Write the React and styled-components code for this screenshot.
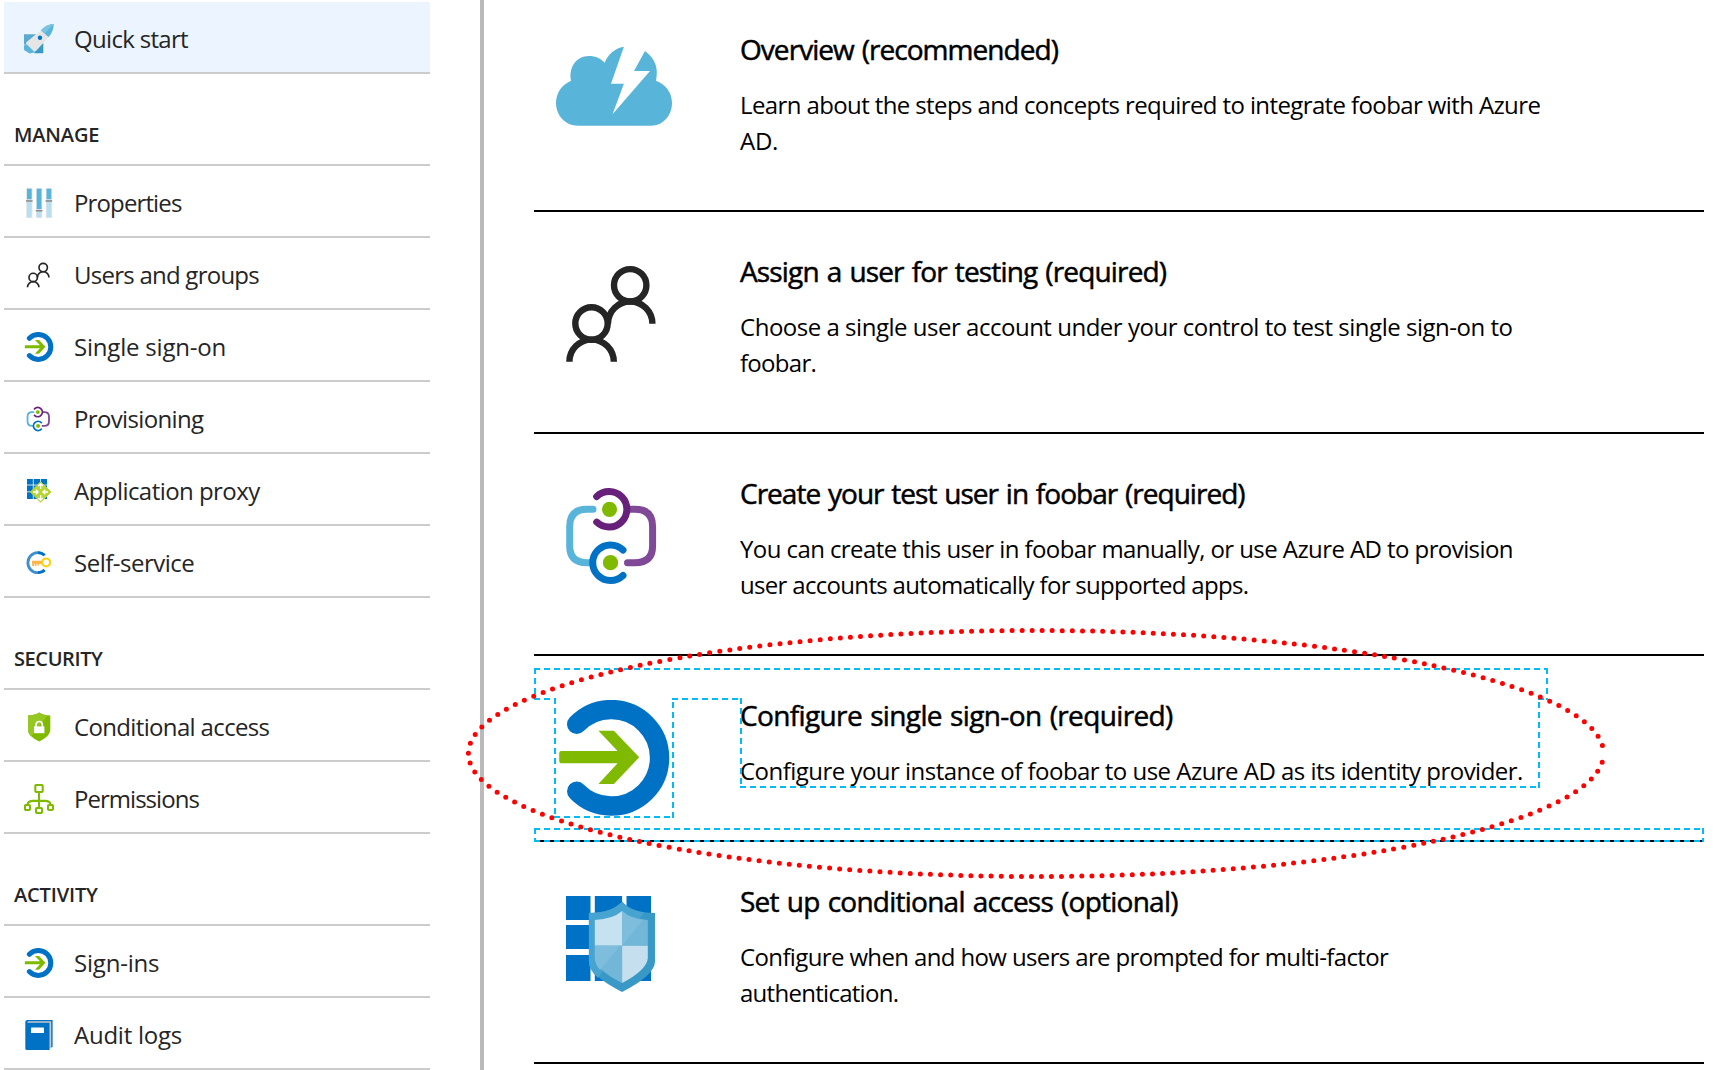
import React from "react";
import styled, { createGlobalStyle } from "styled-components";

const GlobalStyle = createGlobalStyle`
  html, body { margin: 0; padding: 0; background: #fff; overflow: hidden; }
  *, *::before, *::after { box-sizing: border-box; }
`;

const Page = styled.div`
  position: relative;
  display: flex;
  width: 1714px;
  height: 1070px;
  overflow: hidden;
  background: #fff;
  color: #000;
  font-family: "Open Sans", "Noto Sans", sans-serif;
`;

const Sidebar = styled.nav`
  flex: none;
  width: 484px;
  height: 100%;
  padding: 2px 50px 0 4px;
  border-right: 4px solid #bababa;
  color: #252525;
`;

const SectionTitle = styled.h2`
  display: flex;
  align-items: flex-end;
  height: 92px;
  margin: 0;
  padding: 0 0 13px 10px;
  border-bottom: 2px solid #ccc;
  font-size: 20px;
  font-weight: 600;
  line-height: 32px;
  white-space: nowrap;
  letter-spacing: ${(p) => p.$track || 0}px;
`;

const MenuItem = styled.a`
  display: flex;
  align-items: center;
  gap: 20px;
  height: 72px;
  padding: 4px 0 0 20px;
  border-bottom: 2px solid #ccc;
  background: ${(p) => (p.$active ? "#ecf5ff" : "transparent")};
`;

const MenuIcon = styled.svg`
  flex: none;
  width: 30px;
  height: 30px;
`;

const MenuLabel = styled.span`
  font-size: 24px;
  line-height: 32px;
  white-space: nowrap;
  letter-spacing: ${(p) => p.$track || 0}px;
`;

const Main = styled.main`
  flex: 1;
  padding: 0 10px 0 50px;
  margin-top: -10px;
`;

const Step = styled.section`
  display: flex;
  align-items: flex-start;
  gap: 68px;
  height: ${(p) => (p.$short ? 186 : 222)}px;
  padding: 39px 0 0 22px;
  border-bottom: 2px solid #000;
`;

const StepIcon = styled.svg`
  flex: none;
  width: 116px;
  height: 116px;
  margin-top: 5px;
`;

const StepBody = styled.div`
  flex: 1;
`;

const StepTitle = styled.h3`
  margin: 0 0 18px;
  font-size: 28px;
  font-weight: 400;
  line-height: 40px;
  white-space: nowrap;
  word-spacing: 1.5px;
  -webkit-text-stroke: 0.5px #000;
  letter-spacing: ${(p) => p.$track || 0}px;
`;

const StepLine = styled.span`
  display: block;
  font-size: 24px;
  line-height: 36px;
  white-space: nowrap;
  letter-spacing: ${(p) => p.$track || 0}px;
`;

const Annotation = styled.svg`
  position: absolute;
  left: 0;
  top: 0;
  width: 1714px;
  height: 1070px;
  pointer-events: none;
`;

/* ---- glyphs drawn on a 30 unit grid ---- */

const RocketGlyph = () => (
  <>
    <path d="M0 10.300H12L1.500 20.500H0Z" fill="#59a9d0" />
    <path d="M10.300 29.300H19.300V18.500L10.300 27Z" fill="#3999c6" />
    <path d="M1.200 20L0 22V26L5.500 29.500L11 28.200L8 22Z" fill="#59b4d9" />
    <path d="M2.200 19.800Q2 18.600 3.200 17.600L17.200 6.200L24.400 13.200L12.400 26.600Q11 28 10 27.500Z" fill="#e5e5e5" />
    <path d="M17 6.200Q22 .6 29.800 0Q29.400 8 24.500 13.300Z" fill="#59b4d9" />
    <path d="M17 6.200Q22 .6 29.800 0L20.600 9.600Z" fill="#7cc3e1" />
    <circle cx="16" cy="13.800" r="2.200" fill="#0072c6" />
  </>
);

const SlidersGlyph = () => (
  <>
    {[[2.2, 12.2], [12, 22], [21.8, 12.2]].map(([x, y]) => (
      <g key={x}>
        <path d={`M${x} 0h6.2v30h-6.2z`} fill="#dfe5e8" />
        <path d={`M${x + 0.8} .8h4.6v28.4h-4.6z`} fill="#b8dff0" />
        <path d={`M${x + 0.8} .8h4.6V${y}h-4.6z`} fill="#59b4d9" />
        <path d={`M${x} ${y - 1}h6.2v1h-6.2z`} fill="#e5e5e5" />
        <path d={`M${x - 0.2} ${y}h6.6v1.5h-6.6z`} fill="#8a8a8a" />
      </g>
    ))}
  </>
);

const ProxyGlyph = () => (
  <>
    <path d="M3 3h20v20H3z" fill="#0072c6" />
    <path d="M9.300 3v20M16.500 3v20M3 9h20M3 15.800h20" stroke="#fff" strokeWidth=".8" />
    <path d="M16.600 5.800L27 16L16.600 26.200L6.400 16Z" fill="#b8d432" stroke="#b8d432" strokeLinejoin="round" />
    <path d="M16.600 8v5M14.300 10l2.300-2.300L18.900 10M16.600 19v5M14.300 22l2.300 2.300L18.900 22M9 16h5M12 13.700l2.200 2.300L12 18.300M24 16h-5M21.200 13.700L19 16l2.200 2.300" fill="none" stroke="#fff" strokeWidth="1.300" />
  </>
);

const KeyGlyph = () => (
  <>
    <path d="M20.600 7.300A10 10 0 1 0 20.600 22.100" fill="none" stroke="#3e8ed0" strokeWidth="2.800" />
    <path d="M14 4.700A10 10 0 0 1 20.600 7.300M20.600 22.100A10 10 0 0 1 14 24.700" fill="none" stroke="#0072c6" strokeWidth="2.800" />
    <path d="M8 12.800H18v3H15v1.600h-1.500v-1.600h-1V18h-1.600v-2.200h-.8V18H8.200z" fill="#ffb345" />
    <circle cx="22.200" cy="14.400" r="3.900" fill="#fff" stroke="#fcd116" strokeWidth="2.200" />
  </>
);

const ShieldLockGlyph = () => (
  <>
    <path d="M15.200.6Q19 3.400 26.300 3.400V18Q26.300 24 15.200 29.600Q4 24 4 18V3.400Q11.400 3.400 15.200.6Z" fill="#7fba00" />
    <path d="M15.200.6Q19 3.400 23.600 3.300L7 24.600Q4 21.400 4 18V3.400Q11.400 3.400 15.200.6Z" fill="#96c823" />
    <path d="M10 14.400h10.400v6.800H10z" fill="#fff" />
    <path d="M12.100 15V12.800a3.100 3.300 0 0 1 6.200 0V15" fill="none" stroke="#fff" strokeWidth="1.700" />
  </>
);

const TreeGlyph = () => (
  <g fill="none" stroke="#7fba00" strokeWidth="2.100">
    <path d="M15 8.300V23.500M3.500 20.600Q4 16.900 9 16.900H21Q26 16.900 26.600 20.600" />
    <rect x="11.300" y="1" width="7.400" height="7" rx="1" />
    <rect x="1" y="21" width="5" height="5" rx="1" />
    <rect x="12" y="24" width="6" height="5" rx="1" />
    <rect x="24" y="21" width="5" height="5" rx="1" />
  </g>
);

const BookGlyph = () => (
  <>
    <path d="M3 0H28.600V27L26 28V2.600H3Z" fill="#0072c6" />
    <path d="M3.600 1.200H27.200V27.600L25.600 28.600V3H3.600Z" fill="#c8c8c8" />
    <path d="M1.300 2Q1.300 0 3.400 0V2.800H25.600V30H2.800Q1.300 30 1.300 28.400Z" fill="#0072c6" />
    <rect x="7" y="7.400" width="13" height="5.600" rx=".6" fill="#fff" />
  </>
);

/* ---- glyphs drawn on a 116 unit grid, shared by the menu and the steps ---- */

const CloudGlyph = () => (
  <path
    fill="#59b4d9"
    d="M22 91.700C9.500 91.700 0 81.500 0 69C0 59 6 50.500 15 46.700C12.500 33 20.500 22 33 22C39.500 22 45 24.500 48.600 28.700C52 20.500 58.500 14.500 67.900 12.700L55 49.700H67.900L56.500 80.300L94 37H78L89 17C96.500 22.500 100.800 30 100.800 38C100.800 41 100.600 44 100 46.700C109.500 50 116 58.500 116 69C116 81.500 107 91.700 95 91.700Z"
  />
);

const PeopleGlyph = () => (
  <g fill="none" stroke="#252525" strokeWidth="6.400">
    <circle cx="74.200" cy="29.300" r="16.200" />
    <path d="M52 67.700a22.200 22.200 0 0 1 44.400 0" />
    <circle cx="35.500" cy="67.500" r="16.200" />
    <path d="M13.400 105.800a22.200 22.200 0 0 1 44.400 0" />
  </g>
);

const SyncGlyph = () => (
  <>
    <g fill="none" strokeWidth="7" strokeLinecap="round">
      <path d="M37 31.300H31Q13.700 31.300 13.700 48.600V68Q13.700 84.700 31 84.700H36" stroke="#59b4d9" />
      <path d="M74 31.300H79Q96.600 31.300 96.600 48.600V68Q96.600 84.700 79 84.700H71.500" stroke="#804998" />
      <path d="M40.700 18.500A17.800 17.800 0 1 1 40.700 44.100" stroke="#68217a" />
      <path d="M67 72A17.800 17.800 0 1 0 67 97.400" stroke="#0072c6" />
    </g>
    <circle cx="53.500" cy="31.300" r="7.600" fill="#7fba00" />
    <circle cx="54.500" cy="84.700" r="7.600" fill="#7fba00" />
  </>
);

const SignOnGlyph = () => (
  <>
    <path d="M20.700 24.300A48.200 48.200 0 1 1 20.700 91.300" fill="none" stroke="#0072c6" strokeWidth="19.400" strokeLinecap="round" />
    <path d="M5.200 51H61.600L42.400 30.700H57.900L83.200 57.300L57.900 84H42.400L61.600 63.300H5.200Q3.200 63.300 3.200 61.300V53Q3.200 51 5.200 51Z" fill="#7fba00" />
  </>
);

const ShieldGridGlyph = () => (
  <>
    <path d="M10 10h24.500v24H10zM38.800 10h27.300v24H38.800zM70.500 10H95v24H70.500zM10 39h24.500v24H10zM10 69h24.500v26H10zM38.800 39H95v24H38.800zM38.800 69H95v26H38.800z" fill="#0072c6" />
    <path d="M66.100 15.700Q77 27 99 27V75.500Q99 89 66.100 106Q32.900 89 32.900 75.500V27Q55 27 66.100 15.700Z" fill="#3999c6" />
    <path d="M66.100 15.700Q73 24 88 26.500L42 92Q32.900 84 32.900 75.500V27Q55 27 66.100 15.700Z" fill="#47a3cf" />
    <path d="M66.100 25V59.700H38.800V34Q57 33 66.100 25Z" fill="#c6e2f0" />
    <path d="M66.100 25Q75 33 91.800 34V59.700H66.100Z" fill="#73b7d8" />
    <path d="M66.100 25Q75 33 87 33.800L66.100 59.700Z" fill="#7fbddc" />
    <path d="M38.800 59.700H66.100V97Q40 84 38.800 72Z" fill="#73b7d8" />
    <path d="M38.800 59.700H64L44 84Q39 78 38.800 72Z" fill="#7fbddc" />
    <path d="M66.100 59.700H91.800V72Q91 84 66.100 97Z" fill="#c6dfee" />
  </>
);

const menu = [
  { items: [{ label: "Quick start", Glyph: RocketGlyph, grid: 30, active: true, track: -0.68 }] },
  {
    title: "MANAGE",
    track: -0.15,
    items: [
      { label: "Properties", Glyph: SlidersGlyph, grid: 30, track: -0.87 },
      { label: "Users and groups", Glyph: PeopleGlyph, grid: 116, track: -0.75 },
      { label: "Single sign-on", Glyph: SignOnGlyph, grid: 116, track: -0.2 },
      { label: "Provisioning", Glyph: SyncGlyph, grid: 116, track: -0.64 },
      { label: "Application proxy", Glyph: ProxyGlyph, grid: 30, track: -0.55 },
      { label: "Self-service", Glyph: KeyGlyph, grid: 30, track: -0.5 },
    ],
  },
  {
    title: "SECURITY",
    track: -0.4,
    items: [
      { label: "Conditional access", Glyph: ShieldLockGlyph, grid: 30, track: -0.65 },
      { label: "Permissions", Glyph: TreeGlyph, grid: 30, track: -0.97 },
    ],
  },
  {
    title: "ACTIVITY",
    track: -0.15,
    items: [
      { label: "Sign-ins", Glyph: SignOnGlyph, grid: 116, track: -0.2 },
      { label: "Audit logs", Glyph: BookGlyph, grid: 30, track: -0.25 },
    ],
  },
];

const steps = [
  {
    title: "Overview (recommended)",
    track: -0.95,
    Glyph: CloudGlyph,
    lines: [
      ["Learn about the steps and concepts required to integrate foobar with Azure", -0.61],
      ["AD.", -0.3],
    ],
  },
  {
    title: "Assign a user for testing (required)",
    track: -0.84,
    Glyph: PeopleGlyph,
    lines: [
      ["Choose a single user account under your control to test single sign-on to", -0.48],
      ["foobar.", -0.7],
    ],
  },
  {
    title: "Create your test user in foobar (required)",
    track: -0.98,
    Glyph: SyncGlyph,
    lines: [
      ["You can create this user in foobar manually, or use Azure AD to provision", -0.58],
      ["user accounts automatically for supported apps.", -0.68],
    ],
  },
  {
    title: "Configure single sign-on (required)",
    track: -0.63,
    Glyph: SignOnGlyph,
    short: true,
    lines: [["Configure your instance of foobar to use Azure AD as its identity provider.", -0.525]],
  },
  {
    title: "Set up conditional access (optional)",
    track: -0.75,
    Glyph: ShieldGridGlyph,
    lines: [
      ["Configure when and how users are prompted for multi-factor", -0.63],
      ["authentication.", -0.72],
    ],
  },
];

export default function App() {
  return (
    <Page>
      <GlobalStyle />
      <Sidebar>
        {menu.map((section, i) => (
          <React.Fragment key={i}>
            {section.title && <SectionTitle $track={section.track}>{section.title}</SectionTitle>}
            {section.items.map(({ label, Glyph, grid, active, track }) => (
              <MenuItem key={label} $active={active}>
                <MenuIcon viewBox={`0 0 ${grid} ${grid}`}><Glyph /></MenuIcon>
                <MenuLabel $track={track}>{label}</MenuLabel>
              </MenuItem>
            ))}
          </React.Fragment>
        ))}
      </Sidebar>
      <Main>
        {steps.map(({ title, Glyph, lines, short, track }) => (
          <Step key={title} $short={short}>
            <StepIcon viewBox="0 0 116 116"><Glyph /></StepIcon>
            <StepBody>
              <StepTitle $track={track}>{title}</StepTitle>
              {lines.map(([text, t]) => <StepLine key={text} $track={t}>{text}</StepLine>)}
            </StepBody>
          </Step>
        ))}
      </Main>
      <Annotation viewBox="0 0 1714 1070" fill="none">
        <g stroke="#00bcf2" strokeWidth="2" strokeDasharray="6 4">
          <path d="M534 669H1548M535 668V700M534 699H556M555 698V818M554 817H674M673 818V698M672 699H742M741 698V788M740 787H1540M1539 788V698M1538 699H1548M1547 668V700" />
          <path d="M534 829H1704M534 841H1704M535 828V842M1703 828V842" />
        </g>
        <ellipse cx="1036" cy="753.500" rx="567.600" ry="123" stroke="#f00" strokeWidth="5" strokeLinecap="round" strokeDasharray="0 10.100" strokeDashoffset="1.200" />
      </Annotation>
    </Page>
  );
}
